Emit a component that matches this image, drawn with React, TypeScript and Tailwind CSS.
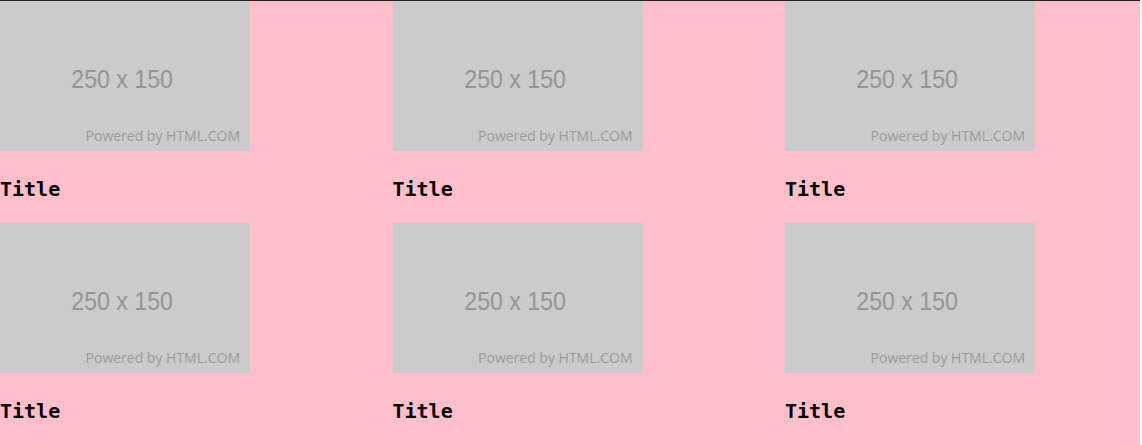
const items = [1, 2, 3, 4, 5, 6];

function Placeholder() {
  return (
    <div className="relative w-[250px] h-[150px] bg-[#cbcbcb]">
      <div className="absolute inset-0 flex items-center justify-center pt-[6px] pr-[5px]">
        <span className="scale-x-[0.89] text-[26px] leading-none text-[#959595] font-['Liberation_Sans',Arial,sans-serif]">
          250 x 150
        </span>
      </div>
      <div className="absolute right-[10px] bottom-[8px] text-[14px] leading-none text-[#9a9a9a] font-['Open_Sans',sans-serif]">
        Powered by HTML.COM
      </div>
    </div>
  );
}

export default function App() {
  return (
    <div className="w-[1140px] min-h-[445px] bg-[#ffbfca] border-t border-[#222222]">
      <div className="grid grid-cols-3 gap-x-[37.5px]">
        {items.map((i) => (
          <div key={i} className="flex flex-col">
            <Placeholder />
            <div className="h-[72px] pt-[26px] text-[20px] leading-[24px] font-bold text-black font-['DejaVu_Sans_Mono',monospace]">
              Title
            </div>
          </div>
        ))}
      </div>
    </div>
  );
}
